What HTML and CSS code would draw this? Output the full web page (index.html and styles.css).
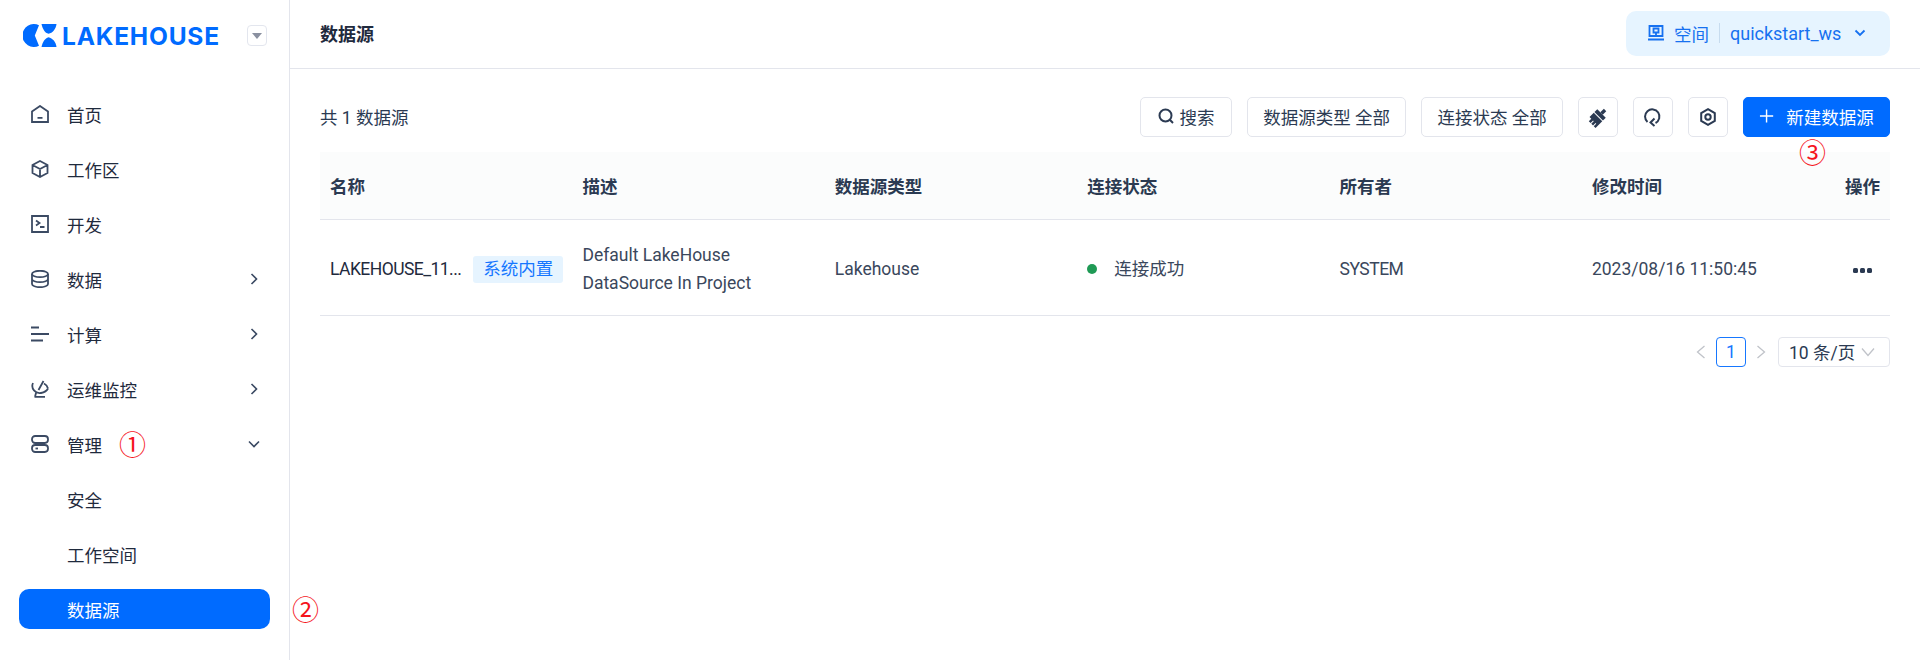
FILE: index.html
```html
<!DOCTYPE html>
<html lang="zh-CN">
<head>
<meta charset="utf-8">
<title>数据源</title>
<link rel="stylesheet" href="styles.css">
</head>
<body>
<div class="app">
  <aside class="sidebar">
    <div class="brand">
      <svg class="logo-mark" viewBox="0 0 34 23"><path fill="#006bff" d="M16 1.200A11.500 11.500 0 1 0 16 21.800L11.800 11.500Z"/><path fill="#006bff" d="M18.500 0H33.500C33 5 29.500 9 25.500 9.800C22 9 19.500 5 18.500 0Z"/><path fill="#006bff" d="M18.500 23H33.500C33 18 29.500 14 25.500 13.200C22 14 19.500 18 18.500 23Z"/></svg>
      <span class="logo-text">LAKEHOUSE</span>
      <span class="brand-toggle"><i class="brand-caret"></i></span>
    </div>
    <nav class="nav">
      <a class="nav-item">
        <svg class="nav-icon" viewBox="0 0 18 18"><path d="M1 17V6.500L9 1L17 6.500V17Z M6.500 12.800H11.500"/></svg>
        <span>首页</span>
      </a>
      <a class="nav-item">
        <svg class="nav-icon" viewBox="0 0 18 18"><path d="M9 1L16.500 5V13L9 17L1.500 13V5Z M1.500 5L9 9L16.500 5 M9 9V17"/></svg>
        <span>工作区</span>
      </a>
      <a class="nav-item">
        <svg class="nav-icon" viewBox="0 0 18 18"><path d="M1 1H17V17H1Z M5 5.500L8.500 8L5 10.500 M9 12H13.500"/></svg>
        <span>开发</span>
      </a>
      <a class="nav-item">
        <svg class="nav-icon" viewBox="0 0 18 18"><ellipse cx="9" cy="4" rx="8" ry="3.200"/><path d="M1 4V14C1 15.800 4.600 17.200 9 17.200S17 15.800 17 14V4 M1 9C1 10.800 4.600 12.200 9 12.200S17 10.800 17 9"/></svg>
        <span>数据</span>
        <svg class="nav-chevron" viewBox="0 0 8 12"><path d="M1.500 1L6.500 6L1.500 11"/></svg>
      </a>
      <a class="nav-item">
        <svg class="nav-icon nav-icon-thick" viewBox="0 0 18 18"><path d="M0 2.500H8 M0 9H18 M0 15.500H12"/></svg>
        <span>计算</span>
        <svg class="nav-chevron" viewBox="0 0 8 12"><path d="M1.500 1L6.500 6L1.500 11"/></svg>
      </a>
      <a class="nav-item">
        <svg class="nav-icon" viewBox="0 0 18 18"><path d="M2 3C-0.500 8.500 4.500 14 10 13C13 12.500 16 10.500 17 8.500 M12.500 1L7.500 10 M13 3.500C15 4.500 16.500 6.500 17 8.500 M5 13L4 16.800 M3.500 16.800H14"/></svg>
        <span>运维监控</span>
        <svg class="nav-chevron" viewBox="0 0 8 12"><path d="M1.500 1L6.500 6L1.500 11"/></svg>
      </a>
      <a class="nav-item">
        <svg class="nav-icon" viewBox="0 0 18 18"><rect x="1" y="1" width="16" height="7" rx="3.200"/><rect x="1" y="10" width="16" height="7" rx="3.200"/><path d="M4.500 13.500H7"/></svg>
        <span>管理</span>
        <svg class="nav-chevron nav-chevron-open" viewBox="0 0 8 12"><path d="M1.500 1L6.500 6L1.500 11"/></svg>
        <span class="mark mark-one">①</span>
      </a>
      <a class="nav-item nav-sub"><span>安全</span></a>
      <a class="nav-item nav-sub"><span>工作空间</span></a>
      <a class="nav-item nav-sub nav-active"><span>数据源</span></a>
    </nav>
    <span class="mark mark-two">②</span>
  </aside>
  <main class="main">
    <header class="topbar">
      <h1 class="page-title">数据源</h1>
      <button class="space-switch">
        <svg class="space-icon" viewBox="0 0 16 16"><path d="M1.500 1H14.500V11H1.500Z M5.500 3.500H10.500V7.500H5.500Z M8 7.500V11 M0 14.500H16"/></svg>
        <span>空间</span>
        <i class="space-divider"></i>
        <span class="space-name">quickstart_ws</span>
        <svg class="space-chevron" viewBox="0 0 12 8"><path d="M1.500 1.500L6 6L10.500 1.500"/></svg>
      </button>
    </header>
    <section class="content">
      <div class="toolbar">
        <span class="count">共 1 数据源</span>
        <div class="actions">
          <button class="btn btn-find"><svg class="btn-search" viewBox="0 0 16 16"><circle cx="7.500" cy="7.500" r="6"/><path d="M11.800 11.800L15 15"/></svg>搜索</button>
          <button class="btn">数据源类型 全部</button>
          <button class="btn">连接状态 全部</button>
          <button class="btn btn-icon"><svg class="tool-icon" viewBox="0 0 18 18"><g class="solid" transform="rotate(45 9 9)"><rect x="7.300" y="-1" width="3.400" height="5"/><rect x="3" y="4" width="12" height="4"/><path d="M3 9H15V18.500H12.500V15H11.500V18.500H9V15H8V18.500H5.500V15H3Z"/></g></svg></button>
          <button class="btn btn-icon"><svg class="tool-icon" viewBox="0 0 18 18"><path d="M3.500 14A7.200 7.200 0 1 1 11.500 15 M10.500 10.500L6.500 14.500L10.500 18"/></svg></button>
          <button class="btn btn-icon"><svg class="tool-icon" viewBox="0 0 18 18"><path d="M9 1.200L15.800 5.100V12.900L9 16.800L2.200 12.900V5.100Z"/><circle cx="9" cy="9" r="2.700"/></svg></button>
          <button class="btn btn-primary"><svg class="btn-plus" viewBox="0 0 16 16"><path d="M8 1V15 M1 8H15"/></svg>新建数据源</button>
          <span class="mark mark-three">③</span>
        </div>
      </div>
      <table class="table">
        <thead>
          <tr>
            <th>名称</th><th>描述</th><th>数据源类型</th><th>连接状态</th><th>所有者</th><th>修改时间</th><th class="cell-end">操作</th>
          </tr>
        </thead>
        <tbody>
          <tr>
            <td><div class="name-cell"><span class="name-text">LAKEHOUSE_11...</span><span class="tag">系统内置</span></div></td>
            <td>Default LakeHouse<br>DataSource In Project</td>
            <td>Lakehouse</td>
            <td><span class="status"><i class="dot"></i>连接成功</span></td>
            <td class="owner">SYSTEM</td>
            <td>2023/08/16 11:50:45</td>
            <td class="cell-end"><span class="more"><i></i><i></i><i></i></span></td>
          </tr>
        </tbody>
      </table>
      <div class="pager">
        <svg class="pager-arrow" viewBox="0 0 10 14"><path d="M8.500 1L1.500 7L8.500 13"/></svg>
        <span class="page-current">1</span>
        <svg class="pager-arrow" viewBox="0 0 10 14"><path d="M1.500 1L8.500 7L1.500 13"/></svg>
        <span class="page-size">10 条/页<svg class="size-chevron" viewBox="0 0 14 10"><path d="M1 1.500L7 8.500L13 1.500"/></svg></span>
      </div>
    </section>
  </main>
</div>
</body>
</html>
```
FILE: styles.css
```css
* { box-sizing: border-box; }
html, body { margin: 0; height: 100%; }
body {
  font-family: "Roboto", "Noto Sans CJK SC", sans-serif;
  font-size: 17.5px;
  color: #2b3a52;
  background: #fff;
  overflow: hidden;
}
button { font: inherit; color: inherit; cursor: pointer; }
.app { display: flex; height: 660px; }

/* sidebar */
.sidebar {
  position: relative;
  width: 290px;
  flex: none;
  border-right: 1px solid #e3e5ec;
  padding: 0 19px;
}
.brand { display: flex; align-items: center; height: 68px; padding-left: 4px; }
.logo-mark { width: 34px; height: 23px; flex: none; margin-top: 3px; }
.logo-text {
  font-family: "Inter", sans-serif;
  font-weight: 700;
  font-size: 24.500px;
  letter-spacing: 0.8px;
  color: #006bff;
  margin-left: 5px;
  margin-top: 3px;
}
.brand-toggle {
  display: flex; align-items: center; justify-content: center;
  width: 20px; height: 21px; margin-left: 27px; margin-top: 3px;
  border: 1px solid #e3e6ee; border-radius: 4px;
}
.brand-caret { width: 0; height: 0; border: 5px solid transparent; border-top: 6px solid #8a90a0; border-bottom: 0; }
.nav { display: flex; flex-direction: column; gap: 15px; margin-top: 26px; }
.nav-item {
  position: relative;
  display: flex; align-items: center;
  height: 40px; padding: 0 12px;
  border-radius: 10px;
  color: #1f2a3d;
}
.nav-icon { width: 18px; height: 18px; margin-right: 18px; flex: none; fill: none; stroke: #3b4a63; stroke-width: 1.800; }
.nav-icon-thick { stroke-width: 2; }
.nav-chevron { width: 8px; height: 12px; margin-left: auto; fill: none; stroke: #3b4a63; stroke-width: 1.600; }
.nav-chevron-open { transform: rotate(90deg); }
.nav-sub { padding-left: 48px; }
.nav-active { background: #006bff; color: #fff; }

/* annotation marks */
.mark {
  position: absolute;
  font-family: "Noto Sans CJK SC", sans-serif;
  font-size: 27px;
  line-height: 30px;
  color: #f5141c;
}
.mark-one { left: 100px; top: 5px; }
.mark-two { left: 292px; top: 594px; }
.mark-three { right: 64px; top: 40px; }

/* main */
.main { flex: 1; min-width: 0; }
.topbar {
  display: flex; align-items: center; justify-content: space-between;
  height: 69px;
  padding: 0 30px 2px 30px;
  border-bottom: 1px solid #e3e5ec;
}
.page-title { margin: 0; font-size: 18px; font-weight: 700; color: #1f2a3d; }
.space-switch {
  display: flex; align-items: center;
  height: 45px; width: 264px;
  padding: 0 24px 0 22px;
  border: 0; border-radius: 10px;
  background: #e6f4ff;
  color: #1671f0;
}
.space-icon { width: 16px; height: 16px; margin-right: 10px; fill: none; stroke: #1671f0; stroke-width: 1.800; }
.space-divider { width: 1px; height: 20px; margin: 0 10px; background: #c7dcef; }
.space-name { white-space: nowrap; font-size: 18px; }
.space-chevron { width: 12px; height: 8px; margin-left: auto; fill: none; stroke: #1671f0; stroke-width: 1.800; }

.content { padding: 28px 30px 0 30px; }
.toolbar { display: flex; align-items: center; justify-content: space-between; height: 40px; }
.count { color: #2b3a52; margin-bottom: 2px; }
.actions { position: relative; display: flex; gap: 15px; }
.btn {
  display: flex; align-items: center; justify-content: center;
  height: 40px; padding: 0 15.200px 2px;
  border: 1px solid #e3e5ec; border-radius: 5px;
  background: #fff;
  white-space: nowrap;
}
.btn-find { width: 92px; padding: 0 0 2px; }
.btn-icon { width: 40px; padding: 0; }
.btn-search { width: 16px; height: 16px; margin-right: 6px; fill: none; stroke: #2b3a52; stroke-width: 2; }
.tool-icon { width: 18px; height: 18px; fill: none; stroke: #2b3a52; stroke-width: 2; overflow: visible; }
.tool-icon .solid { fill: #2b3a52; stroke: none; }
.btn-primary { width: 147px; background: #006bff; border-color: #006bff; color: #fff; }
.btn-plus { width: 16px; height: 16px; margin-right: 12px; fill: none; stroke: #fff; stroke-width: 1.500; }

/* table */
.table { width: 100%; margin-top: 15px; border-collapse: collapse; table-layout: fixed; }
.table th, .table td { padding: 0 10px; text-align: left; }
.table th:nth-child(-n+6), .table td:nth-child(-n+6) { width: 252.400px; }
.table th {
  height: 67px;
  background: #fbfcfc;
  border-bottom: 1px solid #e3e5ec;
  font-weight: 700;
  color: #2b3a52;
}
.table td {
  height: 96px;
  padding-top: 4px;
  border-bottom: 1px solid #e3e5ec;
  line-height: 28px;
  color: #3a475c;
}
.table .cell-end { text-align: right; }
.table .owner { letter-spacing: -0.5px; }
.name-cell { display: flex; align-items: center; gap: 12px; }
.name-text { color: #1f2a3d; white-space: nowrap; letter-spacing: -0.55px; }
.tag {
  padding: 0 10px;
  height: 27px; line-height: 27px;
  border-radius: 3px;
  background: #e6f4ff;
  color: #1677ff;
  white-space: nowrap;
}
.status { display: flex; align-items: center; gap: 17px; }
.dot { width: 10px; height: 10px; border-radius: 50%; background: #1f9a55; }
.more { display: inline-flex; gap: 2px; vertical-align: middle; margin-right: 8px; }
.more i { width: 5px; height: 5px; border-radius: 1.500px; background: #2b3a52; }

/* pager */
.pager { display: flex; align-items: center; justify-content: flex-end; margin-top: 21px; height: 30px; }
.pager-arrow { width: 10px; height: 14px; fill: none; stroke: #c0c3c9; stroke-width: 1.300; }
.page-current {
  display: flex; align-items: center; justify-content: center;
  width: 30px; height: 30px;
  margin: 0 10px;
  border: 1px solid #1677ff; border-radius: 4px;
  color: #1677ff;
}
.page-size {
  display: flex; align-items: center;
  width: 112px; height: 30px;
  margin-left: 12px;
  padding: 0 10px;
  border: 1px solid #e3e5ec; border-radius: 4px;
}
.size-chevron { width: 14px; height: 10px; margin-left: auto; margin-right: 4px; fill: none; stroke: #c0c3c9; stroke-width: 1.300; }
```
